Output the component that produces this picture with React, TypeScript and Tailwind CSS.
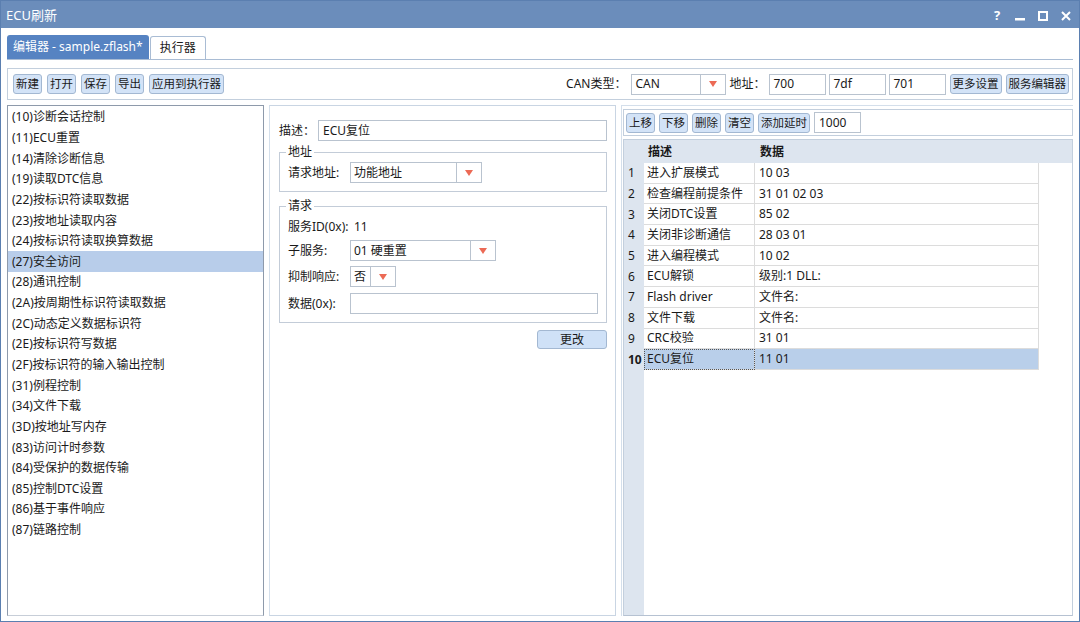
import React from 'react';

const font = { fontFamily: '"Noto Sans", "Noto Sans CJK SC", sans-serif' };

const services = [
  '(10)诊断会话控制',
  '(11)ECU重置',
  '(14)清除诊断信息',
  '(19)读取DTC信息',
  '(22)按标识符读取数据',
  '(23)按地址读取内容',
  '(24)按标识符读取换算数据',
  '(27)安全访问',
  '(28)通讯控制',
  '(2A)按周期性标识符读取数据',
  '(2C)动态定义数据标识符',
  '(2E)按标识符写数据',
  '(2F)按标识符的输入输出控制',
  '(31)例程控制',
  '(34)文件下载',
  '(3D)按地址写内存',
  '(83)访问计时参数',
  '(84)受保护的数据传输',
  '(85)控制DTC设置',
  '(86)基于事件响应',
  '(87)链路控制',
];

const steps = [
  ['进入扩展模式', '10 03'],
  ['检查编程前提条件', '31 01 02 03'],
  ['关闭DTC设置', '85 02'],
  ['关闭非诊断通信', '28 03 01'],
  ['进入编程模式', '10 02'],
  ['ECU解锁', '级别:1 DLL:'],
  ['Flash driver', '文件名:'],
  ['文件下载', '文件名:'],
  ['CRC校验', '31 01'],
  ['ECU复位', '11 01'],
];

const Btn: React.FC<{ label: string; className?: string }> = ({ label, className = '' }) => (
  <button
    className={`h-[20px] px-[2px] rounded-[3px] border border-[#a3b8d2] bg-[#d3e3f7] text-[11.5px] leading-none text-[#1a1a1a] whitespace-nowrap ${className}`}
  >
    {label}
  </button>
);

const Arrow: React.FC = () => (
  <svg width="8" height="6" viewBox="0 0 8 6">
    <path d="M0 0 L8 0 L4 6 Z" fill="#ec6a55" />
  </svg>
);

const Select: React.FC<{ value: string; w: string; arrowW?: string }> = ({ value, w, arrowW = 'w-[25px]' }) => (
  <div className={`flex h-[21px] border border-[#b9c3cf] bg-white ${w}`}>
    <div className="flex-1 flex items-center pl-[3px] text-[12px] truncate">{value}</div>
    <div className={`${arrowW} border-l border-[#b9c3cf] flex items-center justify-center`}>
      <Arrow />
    </div>
  </div>
);

const Input: React.FC<{ value?: string; w: string }> = ({ value = '', w }) => (
  <div className={`h-[21px] border border-[#b9c3cf] bg-white flex items-center pl-[4px] text-[12px] ${w}`}>
    {value}
  </div>
);

const App: React.FC = () => {
  return (
    <div style={font} className="w-[1080px] h-[622px] border border-[#5b7fb0] bg-white text-[#1a1a1a] flex flex-col overflow-hidden">
      {/* title bar */}
      <div className="h-[27px] bg-[#6b8dbb] flex items-center justify-between pl-[5px] pr-[8px] pt-[2px] text-white">
        <span className="text-[13px]">ECU刷新</span>
        <div className="flex items-center gap-[13px]">
          <span className="text-[13px] font-bold w-[10px] text-center">?</span>
          <svg width="10" height="10" viewBox="0 0 10 10"><rect x="0" y="7" width="10" height="2.5" fill="white" /></svg>
          <svg width="10" height="10" viewBox="0 0 10 10"><rect x="1" y="1" width="8" height="8" fill="none" stroke="white" strokeWidth="2" /></svg>
          <svg width="10" height="10" viewBox="0 0 10 10"><path d="M1 1 L9 9 M9 1 L1 9" stroke="white" strokeWidth="2" /></svg>
        </div>
      </div>

      <div className="flex-1 flex flex-col px-[6px]">
        {/* tabs */}
        <div className="mt-[8px] flex items-end border-b border-[#a9bcd4] h-[24px]">
          <div className="h-[24px] px-[6px] flex items-center bg-[#5683c2] text-white text-[12px] rounded-t-[3px]">
            编辑器 - sample.zflash*
          </div>
          <div className="h-[23px] ml-[1px] px-[9px] flex items-center border border-b-0 border-[#a9bcd4] text-[12px] rounded-t-[3px]">
            执行器
          </div>
        </div>

        {/* toolbar */}
        <div className="mt-[8px] h-[32px] border border-[#c3cfdd] flex items-center justify-between pl-[5px] pr-[3px]">
          <div className="flex items-center gap-[5px]">
            <Btn label="新建" />
            <Btn label="打开" />
            <Btn label="保存" />
            <Btn label="导出" />
            <Btn label="应用到执行器" />
          </div>
          <div className="flex items-center text-[12px]">
            <span className="mr-[5px]">CAN类型：</span>
            <Select value="CAN" w="w-[95px]" />
            <span className="ml-[3px] mr-[3px]">地址：</span>
            <Input value="700" w="w-[57px]" />
            <Input value="7df" w="w-[57px] ml-[3px]" />
            <Input value="701" w="w-[57px] ml-[3px]" />
            <Btn label="更多设置" className="ml-[4px]" />
            <Btn label="服务编辑器" className="ml-[4px]" />
          </div>
        </div>

        {/* main area */}
        <div className="mt-[5px] flex-1 flex pb-[5px]">
          {/* service list */}
          <div className="w-[257px] border border-[#8e9aab] border-b-[#c7ced8] pt-[1px] text-[12px]">
            {services.map((s) => (
              <div
                key={s}
                className={`h-[20.65px] flex items-center pl-[4px] ${s === '(27)安全访问' ? 'bg-[#b8cdea]' : ''}`}
              >
                {s}
              </div>
            ))}
          </div>

          {/* detail */}
          <div className="ml-[5px] w-[347px] border border-[#c9d5e3] border-l-[#d4dfeb] pl-[9px] pr-[8px] pt-[14px] text-[12px]">
            <div className="flex items-center">
              <span className="w-[39px]">描述：</span>
              <Input value="ECU复位" w="flex-1" />
            </div>

            <fieldset className="mt-[4px] border border-[#c3ccd8] pl-[8px] pr-[8px] pb-[8px]">
              <legend className="px-[2px] ml-[-2px] leading-[14px]">地址</legend>
              <div className="flex items-center mt-[3px]">
                <span className="w-[62px]">请求地址:</span>
                <Select value="功能地址" w="w-[132px]" />
              </div>
            </fieldset>

            <fieldset className="mt-[7px] border border-[#c3ccd8] pl-[8px] pr-[8px] pb-[8px]">
              <legend className="px-[2px] ml-[-2px] leading-[14px]">请求</legend>
              <div className="flex items-center h-[20px] mt-[4px]">
                <span className="w-[66px]">服务ID(0x):</span>
                <span>11</span>
              </div>
              <div className="flex items-center mt-[3px]">
                <span className="w-[62px]">子服务:</span>
                <Select value="01 硬重置" w="w-[146px]" />
              </div>
              <div className="flex items-center mt-[5px]">
                <span className="w-[62px]">抑制响应:</span>
                <Select value="否" w="w-[46px]" />
              </div>
              <div className="flex items-center mt-[6px]">
                <span className="w-[62px]">数据(0x):</span>
                <Input w="flex-1" />
              </div>
            </fieldset>

            <div className="flex justify-end mt-[7px]">
              <button className="w-[70px] h-[19px] rounded-[3px] border border-[#a3b8d2] bg-[#cfe1f7] text-[12px] leading-none">
                更改
              </button>
            </div>
          </div>

          {/* sequence */}
          <div className="ml-[5px] flex-1 flex flex-col border-t border-l border-[#d4dfeb] pt-[3px] pl-[1px]">
            <div className="h-[27px] border border-[#c3cfdd] flex items-center pl-[2px] gap-[4px]">
              <Btn label="上移" />
              <Btn label="下移" />
              <Btn label="删除" />
              <Btn label="清空" />
              <Btn label="添加延时" />
              <Input value="1000" w="w-[47px]" />
            </div>
            <div className="mt-[3px] flex-1 border border-[#c3cfdd] border-b-[#b6c2d2] flex text-[12px]">
              <div className="w-[20px] bg-[#dde5ef] flex flex-col">
                <div className="h-[23px]" />
                {steps.map((_, i) => (
                  <div
                    key={i}
                    className={`h-[20.7px] flex items-center pl-[4px] ${i === 9 ? 'font-bold pl-[3px]' : ''}`}
                  >
                    {i + 1}
                  </div>
                ))}
              </div>
              <div className="flex-1 flex flex-col">
                <div className="h-[23px] bg-[#dde5ef] flex items-center font-bold">
                  <span className="w-[111px] pl-[4px]">描述</span>
                  <span className="pl-[5px]">数据</span>
                </div>
                {steps.map(([d, v], i) => (
                  <div key={i} className="h-[20.7px] flex">
                    <div
                      className={`w-[111px] flex items-center pl-[3px] border-r border-b border-[#dcdcdc] ${
                        i === 9 ? 'bg-[#b9cfea] outline-1 outline-dotted outline-[#555] -outline-offset-1' : ''
                      }`}
                    >
                      {d}
                    </div>
                    <div
                      className={`w-[284px] flex items-center pl-[4px] border-r border-b border-[#dcdcdc] ${
                        i === 9 ? 'bg-[#b9cfea]' : ''
                      }`}
                    >
                      {v}
                    </div>
                  </div>
                ))}
              </div>
            </div>
          </div>
        </div>
      </div>
    </div>
  );
};

export default App;
